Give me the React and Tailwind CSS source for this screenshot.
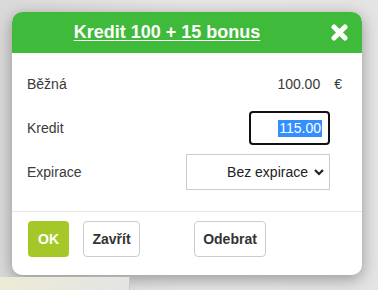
import React from 'react'

const CloseIcon = () => (
  <svg width="17" height="17" viewBox="0 0 17 17" aria-hidden="true">
    <path d="M3 3 L14 14 M14 3 L3 14" stroke="#fff" strokeWidth="5" strokeLinecap="round" />
  </svg>
)

const Chevron = () => (
  <svg width="10" height="8" viewBox="0 0 10 8" aria-hidden="true">
    <path d="M1 2 L5 6 L9 2" fill="none" stroke="#222" strokeWidth="2.2" />
  </svg>
)

export default function App() {
  return (
    <div
      className="w-[378px] h-[290px] overflow-hidden bg-gradient-to-r from-[#dadada] via-[#e6e6e6] to-[#e4e4e4] pt-[12px] pl-[12px]"
      style={{ fontFamily: '"Liberation Sans", Arial, sans-serif' }}
    >
      {/* Dialog */}
      <div className="w-[350px] h-[263px] bg-white rounded-[10px] shadow-[0_4px_16px_rgba(0,0,0,0.35)] flex flex-col">
        {/* Header */}
        <div className="h-[41px] bg-[#3fba3a] rounded-t-[10px] flex items-center">
          <div className="flex-1 text-center text-white font-bold text-[18px] underline underline-offset-2">
            Kredit 100 + 15 bonus
          </div>
          <div className="w-[40px] flex justify-center items-center pr-[5px]">
            <CloseIcon />
          </div>
        </div>

        {/* Body */}
        <div className="pl-[15px] pr-[32px] pt-[18px] text-[14px] text-[#3a3a3a]">
          <div className="h-[26px] flex items-center justify-between -mr-[12px]">
            <span>Běžná</span>
            <span className="flex items-center">
              <span>100.00</span>
              <span className="ml-[14px]">€</span>
            </span>
          </div>

          <div className="mt-[14px] h-[34px] flex items-center justify-between">
            <span>Kredit</span>
            <div className="w-[81px] h-[34px] border-2 border-[#111] rounded-[4px] flex items-center justify-end pr-[6px]">
              <span className="bg-[#338fff] text-white leading-[17px] px-[1px]">115.00</span>
            </div>
          </div>

          <div className="mt-[9px] h-[36px] flex items-center justify-between">
            <span>Expirace</span>
            <div className="w-[144px] h-[36px] border border-[#ccc] flex items-center justify-end pr-[5px] gap-[6px] text-[#222]">
              <span>Bez expirace</span>
              <Chevron />
            </div>
          </div>
        </div>

        <div className="mt-[21px] border-t border-[#e5e5e5]" />

        {/* Footer */}
        <div className="pt-[9px] pl-[16px] flex items-center text-[14px] font-bold">
          <button className="w-[41px] h-[36px] bg-[#a5c828] text-white rounded-[4px]">OK</button>
          <button className="ml-[14px] w-[57px] h-[36px] border border-[#ccc] rounded-[4px] text-[#333] bg-white">
            Zavřít
          </button>
          <button className="ml-[54px] w-[72px] h-[36px] border border-[#ccc] rounded-[4px] text-[#333] bg-white">
            Odebrat
          </button>
        </div>
      </div>

      {/* page behind the overlay */}
      <div className="-ml-[12px] mt-[2px] h-[15px] flex">
        <div className="w-[130px] border-r border-[#c8c8c8] bg-gradient-to-r from-[#ecebd6] to-[#e4e4e4]" />
      </div>
    </div>
  )
}
